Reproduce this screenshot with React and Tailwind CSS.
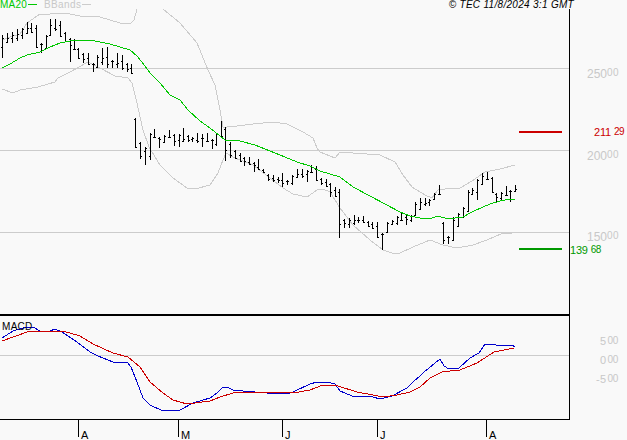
const font = { fontFamily: '"Liberation Sans", Arial, sans-serif' };

// [x, high, low] in chart pixels
const bars = [
  [2,35,58],[7,33,43],[12,32,43],[17,29,41],[22,28,39],[27,22,34],[31,23,33],[36,25,48],[41,43,53],[46,35,49],
  [50,19,36],[55,19,31],[60,21,37],[65,32,42],[70,38,62],[74,39,50],[78,48,59],[83,53,63],[88,53,65],[93,63,72],
  [97,55,68],[102,48,65],[107,47,68],[112,60,68],[117,53,68],[122,55,70],[127,63,72],[131,64,74],[135,118,148],[140,142,159],
  [145,147,165],[150,133,160],[154,129,138],[159,137,148],[164,135,143],[169,130,138],[174,134,146],[179,134,147],[183,128,142],[188,135,142],
  [192,137,142],[197,133,143],[202,134,147],[207,133,142],[212,139,149],[216,133,146],[221,121,137],[225,127,161],[230,142,158],[235,150,159],
  [240,153,162],[244,157,166],[249,157,165],[254,162,172],[258,159,170],[263,169,173],[268,174,181],[273,175,182],[278,177,183],[282,173,187],
  [287,180,185],[292,175,185],[297,169,178],[302,169,178],[307,170,182],[311,165,173],[316,166,181],[321,178,185],[326,179,187],[330,183,197],
  [335,187,197],[339,189,238],[344,219,228],[349,218,228],[354,215,225],[358,217,223],[363,216,223],[368,221,227],[372,222,229],[377,222,238],
  [382,233,250],[387,222,233],[392,220,225],[397,216,225],[401,213,221],[406,215,225],[411,215,222],[415,202,216],[420,198,210],[425,198,206],
  [429,199,206],[434,193,200],[439,185,195],[443,222,244],[448,236,244],[453,217,241],[458,213,227],[463,207,218],[468,190,212],[472,188,195],
  [477,179,200],[482,173,185],[487,172,180],[492,177,193],[496,193,203],[501,192,201],[506,186,196],[510,190,202],[515,185,192],
];

const ma20 = '2,68 10,64 20,58 27,55 40,52 50,47 60,43 70,41 80,40.5 92,40.5 100,42 110,44 120,47 130,50 137,56 145,66 150,73 160,83 170,95 180,100 188,110 200,121 210,128 225,140 240,141 255,145 270,151 285,157 297,162 310,166 320,171 340,177 353,187 370,196 385,204 400,212 410,216 420,218 430,219 437,216 445,218 455,218 463,217 472,212 483,207 490,204 500,201 510,199 515,199';
const bbUp = '2,40 10,37 20,34 27,23 40,14 50,14 60,13 70,14 80,16 100,17 120,23 130,24 134,20 137,9 M163,9 180,23 197,43 208,70 215,85 220,110 223,127 227,127 237,126 253,124 273,122 287,124 303,132 313,138 317,148 320,152 330,156 335,158 340,152 380,155 395,162 403,175 412,187 425,195 432,198 438,190 445,189 460,188 472,181 485,172 500,169 515,165';
const bbLow = '2,89 13,93 20,90 38,87 55,82 58,78 70,72 88,62 100,68 115,76 128,78 132,83 137,103 143,130 149,147 160,165 173,178 187,188 195,189 210,185 218,173 223,160 226,153 235,158 253,165 270,178 283,188 293,194 307,197 317,190 323,189 330,192 340,208 353,225 370,240 383,250 392,253 400,253 413,247 430,240 443,245 457,248 473,245 487,240 503,233 512,233';
const macdBlue = '2,338 13,331 23,328 33,327 40,331 45,332 50,331 55,329 62,332 77,342 90,352 98,356 113,362 127,362 131,367 137,382 143,398 150,405 163,411 180,410 193,403 210,398 217,393 223,387 227,387 233,390 243,391 255,392 267,393 288,394 295,391 310,384 317,382 327,382 335,384 340,391 352,396 373,397 380,399 392,396 407,388 413,382 420,376 424,372 440,359 444,366 449,369 459,368 470,358 479,353 485,344 493,344 499,346 512,345 515,347';
const macdRed = '2,341 13,337 30,331 47,331 63,331 80,336 93,344 113,353 128,357 140,367 150,382 163,393 173,400 187,404 210,401 220,397 233,393 250,392 273,392 293,393 310,390 323,385 338,386 357,392 373,395 383,397 397,395 410,392 420,387 430,378 442,372 450,371 460,370 477,363 494,352 514,348';

const clamp = (v, a, b) => Math.min(Math.max(v, a), b);

const Bars = () =>
  bars.map(([x, h, l], i) => {
    const next = bars[i + 1] || [x, h, l];
    const prev = bars[i - 1] || [x, h, l];
    const close = Math.round(clamp((next[1] + next[2]) / 2, h + 1, l - 1));
    const open = Math.round(clamp((prev[1] + prev[2]) / 2, h + 1, l - 1));
    return (
      <path
        key={x}
        d={`M${x + 0.5} ${h}V${l}M${x - 1} ${open + 0.5}H${x}M${x + 1} ${close + 0.5}H${x + 2}`}
        stroke="#000"
        fill="none"
        shapeRendering="crispEdges"
      />
    );
  });

const Line = ({ points, color }) => (
  <path d={`M${points}`} fill="none" stroke={color} strokeWidth="1" shapeRendering="crispEdges" />
);

// gray scale labels are a bit wider than the coloured price labels
const ScaleLabel = ({ top, left, big, small }) => (
  <div className={`absolute flex items-start text-[#c8c8c8] ${top} ${left}`}>
    <span className="text-[12px] leading-[12px]">{big}</span>
    <span className="text-[10px] leading-[10px] tracking-[0.5px]">{small}</span>
  </div>
);

const PriceLabel = ({ top, left, big, small, color }) => (
  <div className={`absolute flex items-start ${top} ${left} ${color}`}>
    <span className="text-[11px] leading-[11px] tracking-[-0.2px]">{big}</span>
    <span className="text-[10px] leading-[10px] ml-[3px] tracking-[-0.5px]">{small}</span>
  </div>
);

const MacdLabel = ({ top, left, big }) => (
  <div className={`absolute flex items-start text-[#c8c8c8] ${top} ${left}`}>
    <span className="text-[11px] leading-[11px] tracking-[0.3px]">{big}</span>
    <span className="text-[10px] leading-[10px] ml-[1px] tracking-[-0.3px]">00</span>
  </div>
);

const ticks = [
  { label: 'A', width: 'w-[100px]' },
  { label: 'M', width: 'w-[104px]' },
  { label: 'J', width: 'w-[95px]' },
  { label: 'J', width: 'w-[109px]' },
  { label: 'A', width: 'w-[40px]' },
];

export default function App() {
  return (
    <div className="w-[627px] h-[440px] bg-[#f9f9f9] overflow-hidden flex flex-col" style={font}>
      {/* HEADER */}
      <div className="h-[9px] flex justify-between items-center text-[10px] leading-[9px] pr-[53px]">
        <div className="flex items-center">
          <span className="text-[#00c800] tracking-[0.2px]">MA20</span>
          <span className="w-[9px] h-[1px] bg-[#00c800] ml-[1px]"></span>
          <span className="text-[#c8c8c8] tracking-[0.4px] ml-[7px]">BBands</span>
          <span className="w-[9px] h-[1px] bg-[#cccccc] ml-[1px]"></span>
        </div>
        <span className="italic text-black tracking-[0.3px]">© TEC 11/8/2024 3:1 GMT</span>
      </div>

      <div className="flex flex-1">
        <div className="w-[570px] flex flex-col">
          {/* PRICE CHART */}
          <div className="h-[307px] border-r border-b-2 border-black">
            <svg width="569" height="305" viewBox="0 9 569 305" className="block">
              <path d="M0 68.5H569M0 150.5H569M0 232.5H569" stroke="#cccccc" />
              <Line points={bbUp} color="#cccccc" />
              <Line points={bbLow} color="#cccccc" />
              <Bars />
              <Line points={ma20} color="#00c800" />
              <rect x="519" y="131" width="43" height="2" fill="#cc0000" />
              <rect x="519" y="248" width="43" height="2" fill="#009900" />
            </svg>
          </div>

          {/* MACD */}
          <div className="h-[104px] border-r border-b border-black relative">
            <svg width="569" height="103" viewBox="0 316 569 103" className="block">
              <path d="M0 355.5H569" stroke="#cccccc" />
              <Line points={macdBlue} color="#0000cc" />
              <Line points={macdRed} color="#cc0000" />
            </svg>
            <span className="absolute left-[2px] top-[6px] text-[10px] leading-[10px] tracking-[0.3px] text-black">
              MACD
            </span>
          </div>

          {/* TIME AXIS */}
          <div className="flex pl-[78px]">
            {ticks.map((t, i) => (
              <div key={i} className={`${t.width} h-[17px] border-l border-black relative`}>
                <span className="absolute left-[2px] top-[10px] text-[11px] leading-[10px] text-black">
                  {t.label}
                </span>
              </div>
            ))}
          </div>
        </div>

        {/* SCALE */}
        <div className="flex-1 relative">
          <ScaleLabel top="top-[59px]" left="left-[17px]" big="250" small="00" />
          <PriceLabel top="top-[118px]" left="left-[24px]" big="211" small="29" color="text-[#cc0000]" />
          <ScaleLabel top="top-[141px]" left="left-[17px]" big="200" small="00" />
          <ScaleLabel top="top-[222px]" left="left-[17px]" big="150" small="00" />
          <PriceLabel top="top-[236px]" left="left-[0px]" big="139" small="68" color="text-[#009900]" />
          <MacdLabel top="top-[327px]" left="left-[30px]" big="5" />
          <MacdLabel top="top-[346px]" left="left-[30px]" big="0" />
          <MacdLabel top="top-[365px]" left="left-[26px]" big="-5" />
        </div>
      </div>
    </div>
  );
}
